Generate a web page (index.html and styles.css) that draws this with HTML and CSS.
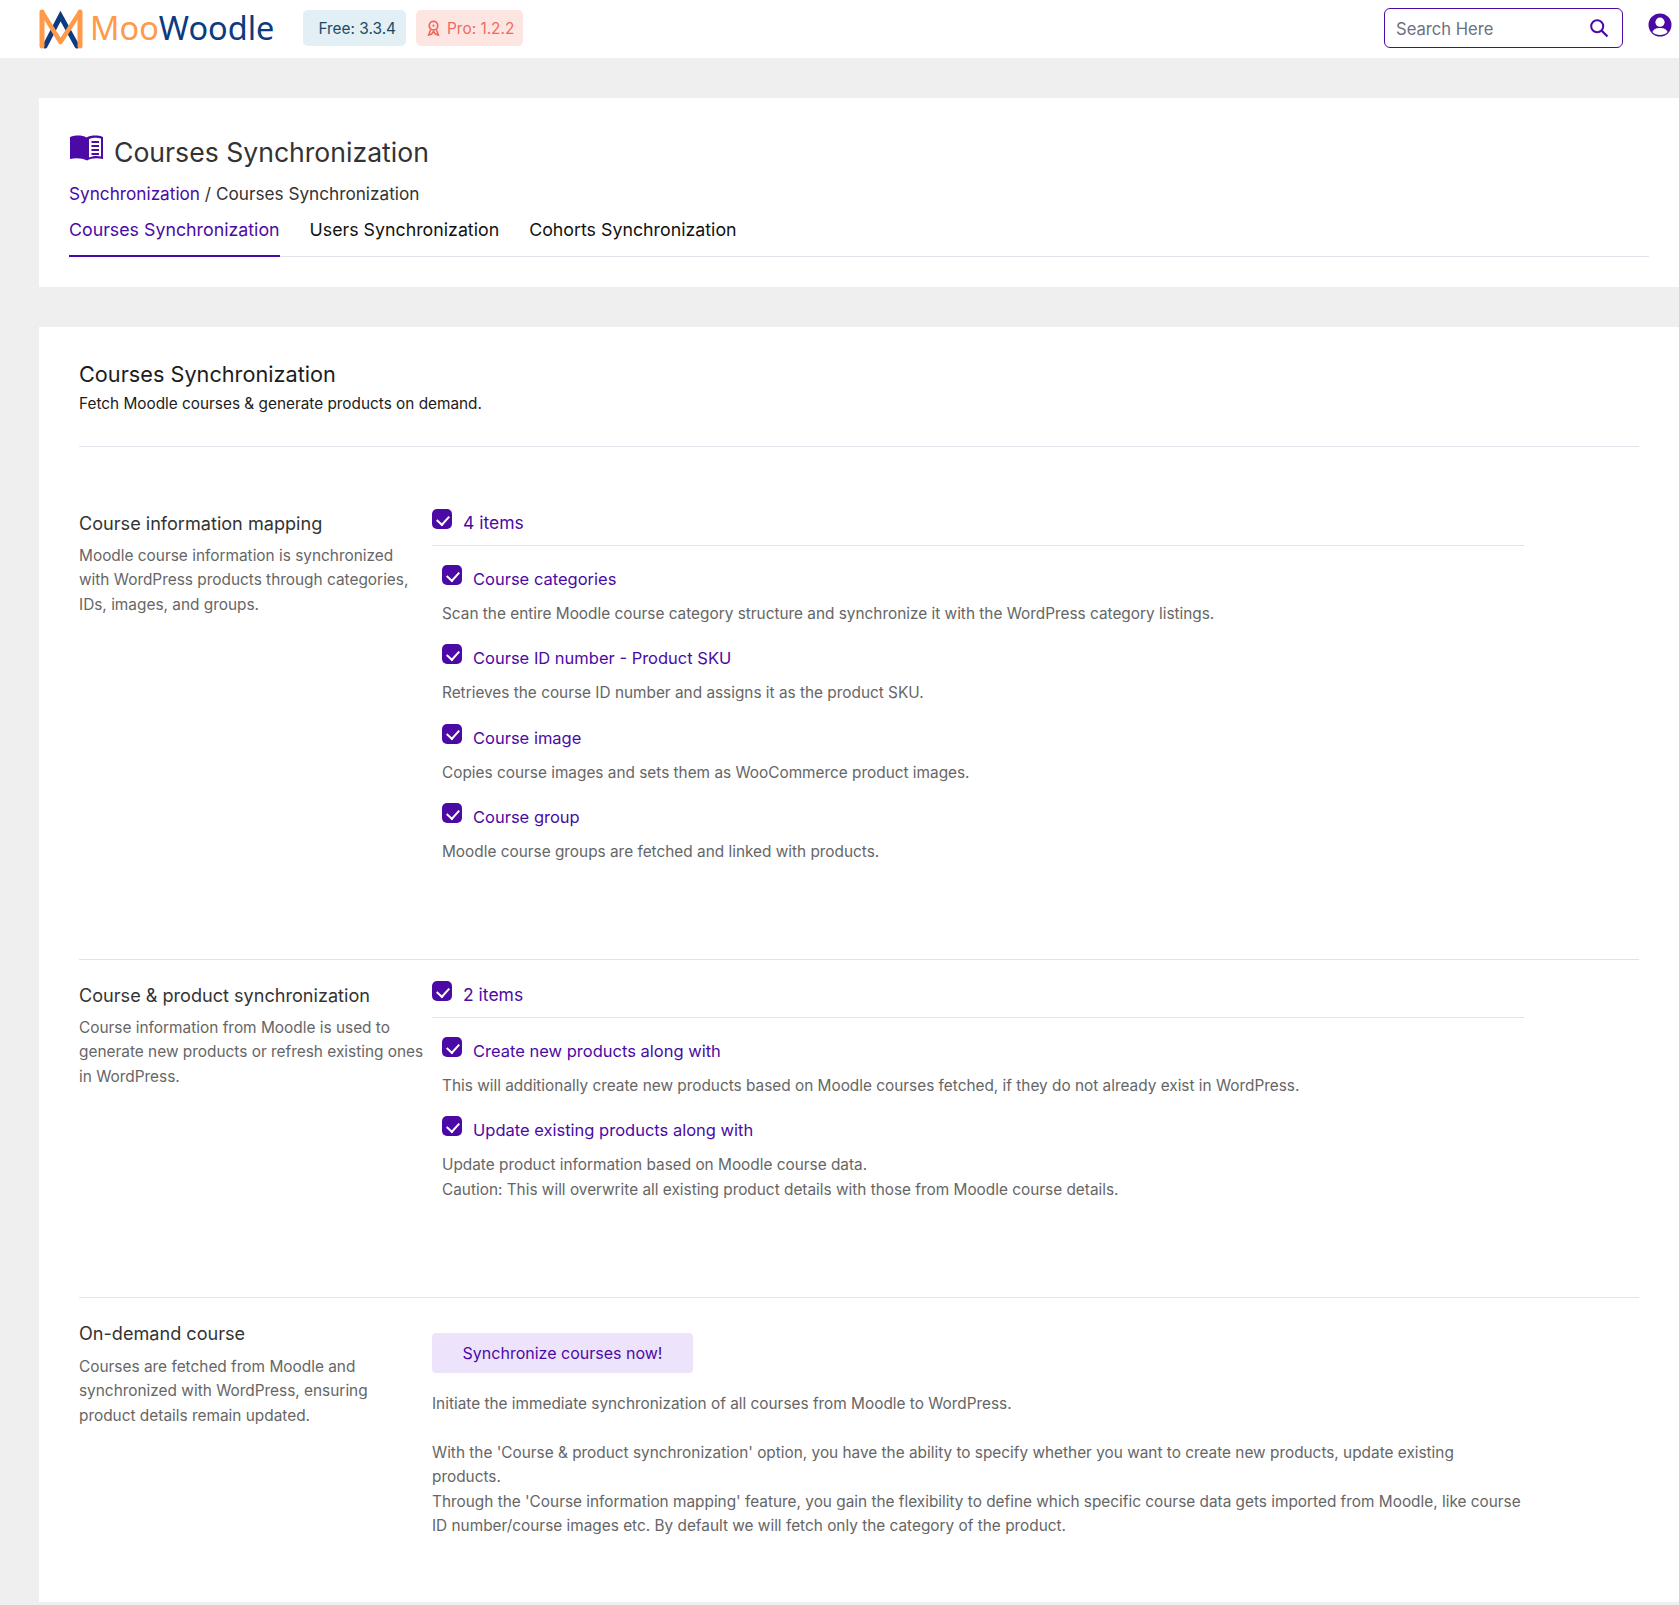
FILE: index.html
```html
<!DOCTYPE html>
<html lang="en">
<head>
<meta charset="utf-8">
<title>Courses Synchronization</title>
<link rel="stylesheet" href="styles.css">
</head>
<body>
<header class="topbar">
  <div class="brand">
    <svg class="logo" viewBox="0 0 44 40" width="44" height="40" aria-hidden="true">
      <path d="M6 37 L21.5 7 L38 37" fill="none" stroke="#0d3b7f" stroke-width="5" stroke-linecap="round"/>
      <path d="M3 3 V37 M41 3 V37" fill="none" stroke="#ff9a4a" stroke-width="5" stroke-linecap="round"/>
      <path d="M3 3 L21.5 33 L41 3" fill="none" stroke="#ff9a4a" stroke-width="4.5" stroke-linejoin="round"/>
    </svg>
    <span class="wordmark"><span class="moo">Moo</span><span class="woodle">Woodle</span></span>
  </div>
  <span class="badge badge-free">Free: 3.3.4</span>
  <span class="badge badge-pro">
    <svg viewBox="0 0 14 18" width="13" height="17" aria-hidden="true"><circle cx="7" cy="6" r="4.6" fill="none" stroke="#f0655a" stroke-width="1.8"/><circle cx="7" cy="6" r="1.2" fill="#f0655a"/><path d="M4 10 L1.8 16 L5 15 L7 12 L9 15 L12.2 16 L10 10" fill="none" stroke="#f0655a" stroke-width="1.7"/></svg>
    Pro: 1.2.2
  </span>
  <div class="spacer"></div>
  <div class="search">
    <span class="search-text">Search Here</span>
    <svg viewBox="0 0 20 20" width="20" height="20" aria-hidden="true"><circle cx="8.2" cy="8.2" r="6" fill="none" stroke="#4b0aa6" stroke-width="2"/><path d="M12.6 12.6 L18.5 18.5" stroke="#4b0aa6" stroke-width="2.2"/></svg>
  </div>
  <svg class="avatar" viewBox="0 0 24 24" width="24" height="24" aria-hidden="true"><circle cx="12" cy="12" r="11.5" fill="#4b0aa6"/><circle cx="12" cy="9.2" r="4.6" fill="#fff"/><path d="M4.4 19 C6 15.6 9 15 12 15 S18 15.6 19.6 19 C17.6 21.2 15 22 12 22 S6.4 21.2 4.4 19Z" fill="#fff"/></svg>
</header>

<main class="page">
  <section class="card card-head">
    <h1 class="page-title">
      <svg class="book" viewBox="0 0 33 26" width="33" height="26" aria-hidden="true"><path d="M0 2 C6 0 12 0 16.5 2.5 C21 0 28 0 33 2 V24 C27 22.5 21 23 17 25.5 C12 23 6 22.5 0 24Z" fill="#4b0aa6"/><path d="M19 4 C23 2.5 27 2.5 31 3.5 V21.5 C27 20.5 22 21 19 22.5Z" fill="#fff"/><path d="M21.5 7 H29 M21.5 11 H29 M21.5 15 H29 M21.5 19 H29" stroke="#4b0aa6" stroke-width="2.1"/></svg>
      <span>Courses Synchronization</span>
    </h1>
    <div class="crumbs"><a class="link">Synchronization</a> / Courses Synchronization</div>
    <nav class="tabs">
      <a class="tab tab-active">Courses Synchronization</a>
      <a class="tab">Users Synchronization</a>
      <a class="tab">Cohorts Synchronization</a>
    </nav>
  </section>

  <section class="card card-body">
    <div class="intro">
      <h2 class="intro-title">Courses Synchronization</h2>
      <p class="intro-sub">Fetch Moodle courses &amp; generate products on demand.</p>
    </div>

    <div class="row row-mapping">
      <div class="label">
        <h3 class="label-title">Course information mapping</h3>
        <p class="label-desc">Moodle course information is synchronized with WordPress products through categories, IDs, images, and groups.</p>
      </div>
      <div class="field">
        <div class="check-all"><span class="box"></span><span class="check-label">4 items</span></div>
        <div class="opts">
          <div class="opt"><div class="check-line"><span class="box"></span><span class="check-label">Course categories</span></div><p class="desc">Scan the entire Moodle course category structure and synchronize it with the WordPress category listings.</p></div>
          <div class="opt"><div class="check-line"><span class="box"></span><span class="check-label">Course ID number - Product SKU</span></div><p class="desc">Retrieves the course ID number and assigns it as the product SKU.</p></div>
          <div class="opt"><div class="check-line"><span class="box"></span><span class="check-label">Course image</span></div><p class="desc">Copies course images and sets them as WooCommerce product images.</p></div>
          <div class="opt"><div class="check-line"><span class="box"></span><span class="check-label">Course group</span></div><p class="desc">Moodle course groups are fetched and linked with products.</p></div>
        </div>
      </div>
    </div>

    <div class="row row-sync">
      <div class="label">
        <h3 class="label-title">Course &amp; product synchronization</h3>
        <p class="label-desc">Course information from Moodle is used to generate new products or refresh existing ones in WordPress.</p>
      </div>
      <div class="field">
        <div class="check-all"><span class="box"></span><span class="check-label">2 items</span></div>
        <div class="opts">
          <div class="opt"><div class="check-line"><span class="box"></span><span class="check-label">Create new products along with</span></div><p class="desc">This will additionally create new products based on Moodle courses fetched, if they do not already exist in WordPress.</p></div>
          <div class="opt"><div class="check-line"><span class="box"></span><span class="check-label">Update existing products along with</span></div><p class="desc">Update product information based on Moodle course data.<br>Caution: This will overwrite all existing product details with those from Moodle course details.</p></div>
        </div>
      </div>
    </div>

    <div class="row row-demand">
      <div class="label">
        <h3 class="label-title">On-demand course</h3>
        <p class="label-desc">Courses are fetched from Moodle and synchronized with WordPress, ensuring product details remain updated.</p>
      </div>
      <div class="field">
        <button class="sync-btn" type="button">Synchronize courses now!</button>
        <p class="demand-text">Initiate the immediate synchronization of all courses from Moodle to WordPress.<br><br>With the 'Course &amp; product synchronization' option, you have the ability to specify whether you want to create new products, update existing products.<br>Through the 'Course information mapping' feature, you gain the flexibility to define which specific course data gets imported from Moodle, like course ID number/course images etc. By default we will fetch only the category of the product.</p>
      </div>
    </div>
  </section>
</main>
</body>
</html>
```
FILE: styles.css
```css
* { box-sizing: border-box; }
html, body { margin: 0; padding: 0; }
body {
  background: #efefef;
  font-family: "Inter", "Liberation Sans", sans-serif;
  color: #333;
  font-size: 15px;
}
h1, h2, h3, p { margin: 0; font-weight: 400; }
.topbar {
  height: 58px;
  background: #fff;
  display: flex;
  align-items: center;
  padding: 0 7px 0 39px;
}
.brand { display: flex; align-items: center; gap: 7px; margin-right: 29px; margin-bottom: 1px; }
.logo { display: block; }
.wordmark { font-family: "Noto Sans", sans-serif; font-size: 32.5px; line-height: 40px; margin-bottom: 2px; }
.moo { color: #ff9a4a; }
.woodle { color: #0d3b7f; }
.badge {
  height: 36px;
  display: inline-flex;
  align-items: center;
  gap: 7px;
  border-radius: 5px;
  font-size: 15.4px;
  margin-bottom: 2px;
}
.badge-free { background: #e2f0f6; color: #1d4a63; padding: 0 10px 0 15px; margin-right: 10px; }
.badge-pro { background: #fde6e2; color: #ef6a5e; padding: 0 9px 0 11px; }
.spacer { flex: 1; }
.search {
  width: 239px;
  height: 40px;
  border: 1px solid #4b0aa6;
  border-radius: 6px;
  display: flex;
  align-items: center;
  justify-content: space-between;
  padding: 0 13px 0 11px;
  margin-right: 25px;
  margin-bottom: 2px;
}
.search-text { font-size: 16.6px; color: #6b7280; padding-top: 2px; }
.avatar { margin-bottom: 8px; }
.page { padding: 40px 0 3px 39px; }
.card { background: #fff; }
.card-head { height: 189px; padding: 30px 30px 0; margin-bottom: 40px; }
.page-title { display: flex; align-items: center; gap: 11px; font-size: 26.6px; color: #333; height: 40px; padding-top: 8px; }
.book { margin: 0 0 8px 1px; }
.crumbs { margin-top: 13px; font-size: 17.2px; line-height: 26px; color: #333; }
.link { color: #4b0aa6; }
.tabs { display: flex; gap: 30px; border-bottom: 1px solid #e2e2ea; margin-top: 6px; height: 44px; }
.tab { font-size: 17.8px; line-height: 30px; color: #111; height: 44px; padding-top: 2px; }
.tab-active { color: #4b0aa6; border-bottom: 2px solid #4b0aa6; }
.card-body { padding: 29px 40px 0; height: 1275px; }
.intro { height: 91px; border-bottom: 1px solid #e2e2ea; }
.intro-title { font-size: 21.7px; line-height: 36px; color: #1c1c1c; }
.intro-sub { font-size: 15.35px; line-height: 24px; color: #1c1c1c; }
.row { display: grid; grid-template-columns: 353px 1092px; border-bottom: 1px solid #e2e2ea; }
.row-mapping { height: 513px; padding-top: 63px; }
.row-sync { height: 338px; padding-top: 22px; }
.row-demand { border-bottom: 0; padding-top: 22px; }
.label { padding-right: 5px; }
.label-title { font-size: 18.1px; line-height: 26px; color: #333; }
.label-desc { font-size: 15.4px; line-height: 24.4px; color: #666; margin-top: 8px; }
.row-demand .label-desc { margin-top: 9px; }
.row-mapping .field, .row-sync .field { margin-top: -1px; }
.check-all { display: flex; align-items: flex-start; gap: 11px; height: 37px; border-bottom: 1px solid #e2e2ea; margin-bottom: 19px; }
.box {
  width: 20px;
  height: 20px;
  flex: none;
  border-radius: 5px;
  background: #4b0aa6;
  position: relative;
}
.box::after {
  content: "";
  position: absolute;
  left: 7px;
  top: 3.5px;
  width: 6px;
  height: 10px;
  border: solid #fff;
  border-width: 0 2.4px 2.4px 0;
  transform: rotate(42deg);
}
.check-label { font-size: 16.5px; line-height: 26px; color: #4b0aa6; padding-top: 1px; }
.check-all .check-label { font-size: 17.5px; }
.opts { padding-left: 10px; }
.opt { margin-bottom: 18px; }
.check-line { display: flex; gap: 11px; align-items: flex-start; height: 26px; }
.desc { font-size: 15.37px; line-height: 24.4px; color: #666; margin-top: 11px; }
.sync-btn {
  display: block;
  width: 261px;
  height: 40px;
  margin-top: 13px;
  border: 0;
  border-radius: 4px;
  background: #ede4fb;
  color: #4b0aa6;
  font: inherit;
  font-size: 16px;
}
.demand-text { font-size: 15.37px; line-height: 24.4px; color: #666; margin-top: 19px; }
```
